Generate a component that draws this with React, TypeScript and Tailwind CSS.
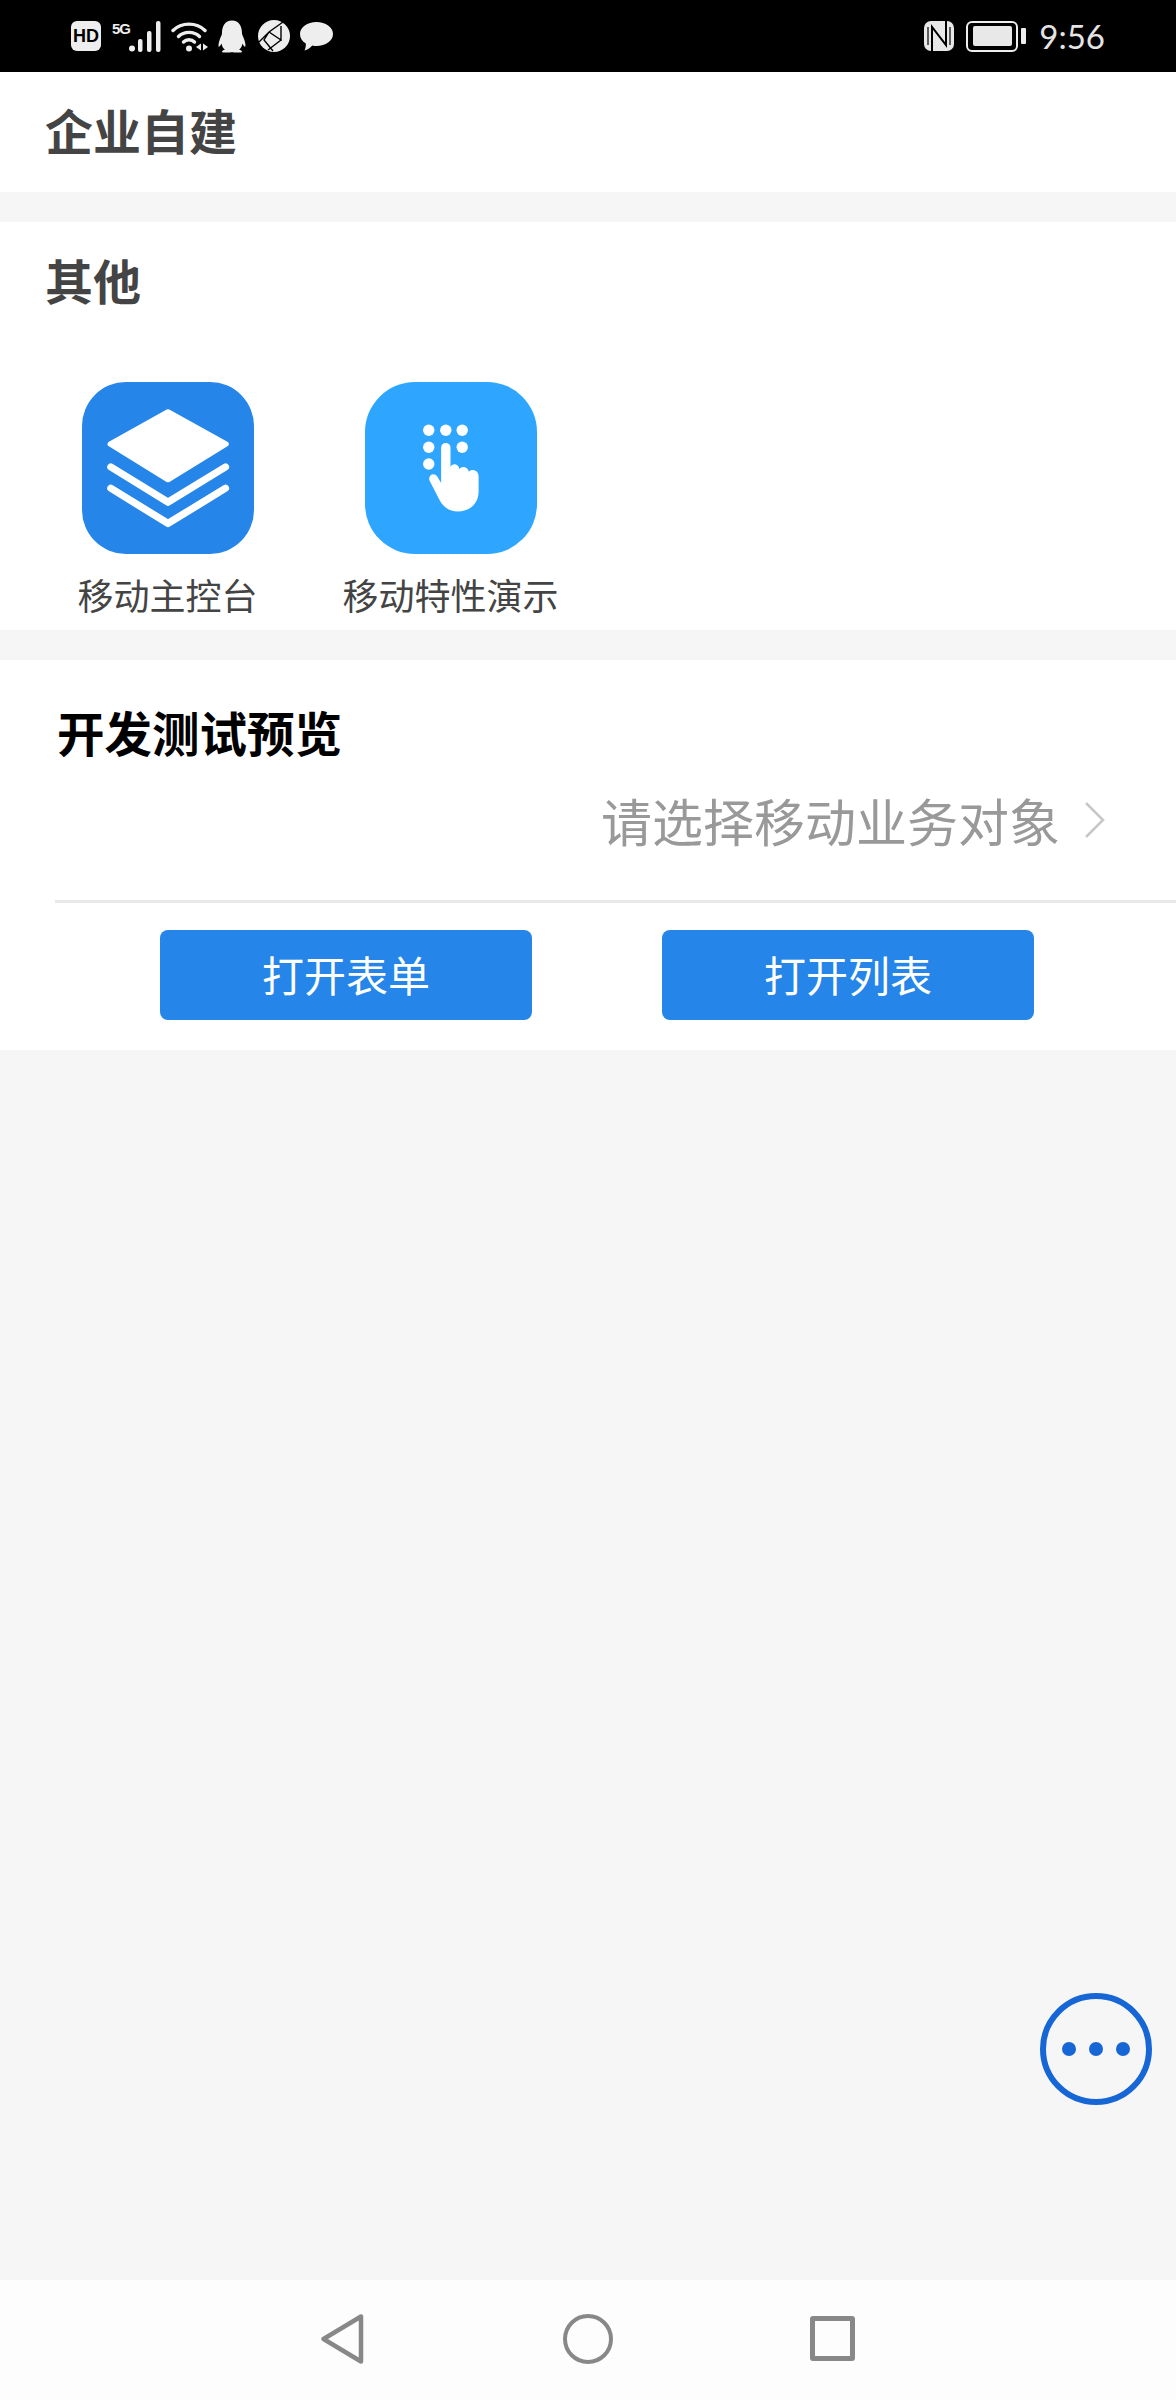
import { FaQq } from "react-icons/fa";

const cjk = { fontFamily: '"Noto Sans CJK SC", "Noto Sans", sans-serif' };

// Status bar glyphs, each on its own small viewBox
function SignalBars() {
  return (
    <svg width="32" height="31" viewBox="0 0 32 31" className="block">
      <circle cx="3" cy="27.5" r="3" fill="#eee" />
      <rect x="9" y="18" width="4.5" height="13" rx="2" fill="#eee" />
      <rect x="18" y="10" width="4.5" height="21" rx="2" fill="#eee" />
      <rect x="27" y="0" width="4.5" height="31" rx="2" fill="#eee" />
    </svg>
  );
}

function Wifi() {
  return (
    <svg width="37" height="31" viewBox="0 0 37 31" className="block" fill="none">
      <path d="M2 9.5C10.5 1 25.5 1 34 9.5" stroke="#eee" strokeWidth="3.4" strokeLinecap="round" />
      <path d="M7.5 15.5C13 10 23 10 28.5 15.5" stroke="#eee" strokeWidth="3.4" strokeLinecap="round" />
      <path d="M12.5 21C15.5 18 20.5 18 23.5 21" stroke="#eee" strokeWidth="3.4" strokeLinecap="round" />
      <circle cx="18" cy="27.5" r="3" fill="#eee" />
      <path d="M25 26L30 22.5V29.5Z" fill="#eee" />
      <path d="M32 22.5L37 26L32 29.5Z" fill="#eee" />
    </svg>
  );
}

function BrowserGlobe() {
  return (
    <svg width="32" height="32" viewBox="0 0 32 32" className="block">
      <circle cx="16" cy="16" r="16" fill="#eee" />
      <path d="M1 22L11 12L25 2M11 12L23 20L23 6M23 20L10 30M11 12L6 20L15 31" stroke="#000" strokeWidth="1.4" fill="none" />
    </svg>
  );
}

function ChatBubble() {
  return (
    <svg width="33" height="29" viewBox="0 0 33 29" className="block">
      <path d="M16.5 0C25.6 0 33 5.2 33 12S25.6 24 16.5 24C15 24 13.6 23.9 12.3 23.5C10 26 7.5 27.8 4.5 28.6C5.6 26.2 6 24 5.8 21.6C2.2 19.4 0 16 0 12C0 5.2 7.4 0 16.5 0Z" fill="#eee" />
    </svg>
  );
}

function NfcMark() {
  return (
    <svg width="30" height="30" viewBox="0 0 30 30" className="block">
      <rect width="30" height="30" rx="7" fill="#e8e8e8" />
      <path d="M8 30V6L22 24V0" stroke="#000" strokeWidth="2" fill="none" />
      <path d="M4 6V24" stroke="#000" strokeWidth="1.2" />
      <path d="M26 6V24" stroke="#000" strokeWidth="1.2" />
    </svg>
  );
}

function Battery() {
  return (
    <div className="flex items-center gap-[3px]">
      <div className="flex h-[31px] w-[52px] items-center justify-center rounded-[6px] border-2 border-[#eee]">
        <div className="h-[20px] w-[39px] rounded-[2px] bg-[#e8e8e8]" />
      </div>
      <div className="h-[16px] w-[5px] rounded-[1px] bg-[#eee]" />
    </div>
  );
}

function StatusBar() {
  return (
    <div className="flex h-[72px] shrink-0 items-center justify-between bg-black pl-[71px] pr-[71px]">
      <div className="flex items-center">
        <div className="flex h-[30px] w-[30px] items-center justify-center rounded-[6px] bg-[#eee]">
          <span className="text-[18px] font-bold leading-none text-black" style={{ fontFamily: '"Liberation Sans Narrow", "Liberation Sans", sans-serif' }}>
            HD
          </span>
        </div>
        <div className="ml-[11px] flex items-start">
          <span className="mb-[12px] w-[17px] text-[15px] font-bold leading-none tracking-[-1px] text-[#eee]" style={{ fontFamily: '"Liberation Sans", sans-serif' }}>
            5G
          </span>
          <SignalBars />
        </div>
        <div className="ml-[10px]">
          <Wifi />
        </div>
        <FaQq className="ml-[10px] h-[33px] w-[28px] text-[#eee]" />
        <div className="ml-[12px]">
          <BrowserGlobe />
        </div>
        <div className="ml-[10px]">
          <ChatBubble />
        </div>
      </div>
      <div className="flex items-center">
        <NfcMark />
        <div className="ml-[12px]">
          <Battery />
        </div>
        <span className="ml-[13px] text-[33px] font-normal leading-none text-[#e4e4e4]" style={{ fontFamily: 'Lato, sans-serif' }}>
          9:56
        </span>
      </div>
    </div>
  );
}

function LayersIcon() {
  return (
    <div className="h-[172px] w-[172px] rounded-[44px] bg-[#2585e8]">
      <svg viewBox="97 66 516 518" className="block h-full w-full">
        <path d="M355 156L530 253L355 360L181 253Z" fill="#fff" stroke="#fff" strokeWidth="16" strokeLinejoin="round" />
        <path d="M183 322L355 428L528 322" fill="none" stroke="#fff" strokeWidth="22" strokeLinecap="round" strokeLinejoin="round" />
        <path d="M183 386L355 492L528 386" fill="none" stroke="#fff" strokeWidth="22" strokeLinecap="round" strokeLinejoin="round" />
      </svg>
    </div>
  );
}

function TouchIcon() {
  const dots = [
    [1135, 212],
    [1186, 212],
    [1235, 212],
    [1135, 263],
    [1235, 263],
    [1135, 313],
  ];
  return (
    <div className="h-[172px] w-[172px] rounded-[50px] bg-[#2ea6ff]">
      <svg viewBox="945 68 513 514" className="block h-full w-full">
        {dots.map(([cx, cy]) => (
          <circle key={`${cx}-${cy}`} cx={cx} cy={cy} r="17" fill="#fff" />
        ))}
        <path
          d="M1172 264A14 14 0 0 1 1200 264L1200 322C1204 310 1224 310 1227 328C1232 318 1252 320 1255 336C1262 326 1284 330 1284 350L1284 395C1284 430 1258 455 1222 455C1195 455 1178 440 1168 422L1138 364C1130 348 1150 335 1160 350L1172 370Z"
          fill="#fff"
        />
      </svg>
    </div>
  );
}

function AppTile({ label, icon }: { label: string; icon: React.ReactNode }) {
  return (
    <div className="flex w-[283px] flex-col items-center">
      {icon}
      <span className="mt-[18px] text-[36px] leading-[44px] text-[#444]">{label}</span>
    </div>
  );
}

function Chevron() {
  return (
    <svg width="22" height="40" viewBox="0 0 22 40" className="block" fill="none">
      <path d="M2 3L19 20L2 37" stroke="#c8c8c8" strokeWidth="2.6" />
    </svg>
  );
}

function ActionButton({ label }: { label: string }) {
  return (
    <button className="flex h-[90px] w-[372px] items-center justify-center rounded-[8px] bg-[#2585e8] pb-[2px] text-[42px] leading-none text-white">
      {label}
    </button>
  );
}

function NavBar() {
  return (
    <div className="flex h-[120px] shrink-0 items-center justify-center gap-[197px] bg-[#fdfdfd] pb-[3px] pr-[2px]">
      <svg width="46" height="52" viewBox="0 0 46 52" className="block" fill="none">
        <path d="M41 3.5V48.5L3.5 26Z" stroke="#888" strokeWidth="4.5" strokeLinejoin="round" />
      </svg>
      <div className="h-[50px] w-[50px] rounded-full border-[4.5px] border-[#888]" />
      <div className="h-[45px] w-[45px] rounded-[3px] border-[5px] border-[#888]" />
    </div>
  );
}

export default function App() {
  return (
    <div className="relative flex h-[2400px] w-[1176px] flex-col overflow-hidden bg-[#f6f6f6]" style={cjk}>
      <StatusBar />

      <div className="flex h-[120px] shrink-0 items-center bg-white pl-[45px] pb-[7px]">
        <h1 className="text-[48px] font-bold leading-none text-[#444]">企业自建</h1>
      </div>

      <section className="mt-[30px] h-[408px] shrink-0 bg-white">
        <h2 className="pl-[45px] pt-[33px] text-[48px] font-bold leading-[48px] text-[#444]">其他</h2>
        <div className="mt-[79px] flex pl-[26px]">
          <AppTile label="移动主控台" icon={<LayersIcon />} />
          <AppTile label="移动特性演示" icon={<TouchIcon />} />
        </div>
      </section>

      <section className="mt-[30px] h-[390px] shrink-0 bg-white">
        <h2 className="pl-[57px] pt-[48px] text-[47.5px] font-bold leading-[48px] text-black">开发测试预览</h2>
        <div className="mt-[26px] flex h-[76px] items-center justify-end pr-[70px]">
          <span className="text-[51px] leading-none text-[#999]">请选择移动业务对象</span>
          <div className="ml-[24px]">
            <Chevron />
          </div>
        </div>
        <div className="mt-[42px] ml-[55px] h-[3px] bg-[#e8e8e8]" />
        <div className="mt-[27px] flex gap-[130px] pl-[160px]">
          <ActionButton label="打开表单" />
          <ActionButton label="打开列表" />
        </div>
      </section>

      <div className="flex-1" />
      <NavBar />

      {/* Floating "more" button above the page content */}
      <div className="absolute left-[1040px] top-[1993px] flex h-[112px] w-[112px] items-center justify-center gap-[13px] rounded-full border-[6px] border-[#1766d6]">
        <span className="h-[14px] w-[14px] rounded-full bg-[#1766d6]" />
        <span className="h-[14px] w-[14px] rounded-full bg-[#1766d6]" />
        <span className="h-[14px] w-[14px] rounded-full bg-[#1766d6]" />
      </div>
    </div>
  );
}
